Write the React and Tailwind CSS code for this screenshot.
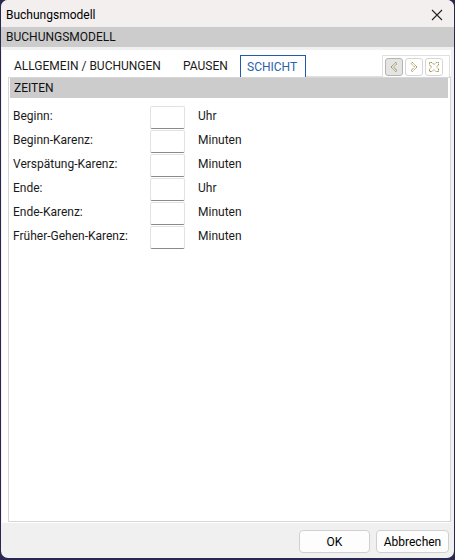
import React from "react";

const rows = [
  ["Beginn:", "Uhr"],
  ["Beginn-Karenz:", "Minuten"],
  ["Verspätung-Karenz:", "Minuten"],
  ["Ende:", "Uhr"],
  ["Ende-Karenz:", "Minuten"],
  ["Früher-Gehen-Karenz:", "Minuten"],
];

function NavBtn({ pressed, children }) {
  return (
    <div
      className={
        "w-[18px] h-[18px] rounded-[3px] border flex items-center justify-center " +
        (pressed ? "bg-[#e4e4e4] border-[#b4b4b4]" : "bg-white border-[#d6d6d6]")
      }
    >
      {children}
    </div>
  );
}

const ic = { fill: "none", stroke: "#8c7a26", strokeWidth: 1, strokeDasharray: "1 0.7" };

export default function App() {
  return (
    <div
      className="w-[455px] h-[560px] bg-[#2a2850] overflow-hidden"
      style={{ fontFamily: 'Roboto, "Liberation Sans", Arial, sans-serif' }}
    >
      <div className="w-[453px] h-[558px] ml-[1px] rounded-[7px] bg-[#f0f0f0] flex flex-col overflow-hidden text-[12px] text-[#1a1a1a]">
        {/* title bar */}
        <div className="h-[27px] bg-[#f3efef] flex items-center justify-between pl-[5px] pr-[10px] pt-[3px] shrink-0">
          <span className="text-[12px] text-black">Buchungsmodell</span>
          <svg width="12" height="12" viewBox="0 0 12 12" className="mr-[1px]">
            <path d="M1 1L11 11M11 1L1 11" stroke="#222" strokeWidth="1.1" />
          </svg>
        </div>
        {/* header */}
        <div className="h-[20px] bg-[#cccccc] flex items-center pl-[5px] shrink-0">
          <span className="text-[12px] text-[#111]">BUCHUNGSMODELL</span>
        </div>
        <div className="h-[3px] shrink-0" />
        {/* white area */}
        <div className="flex-1 ml-[1px] w-[449px] bg-white flex flex-col pl-[6px] min-h-0">
          {/* tabs row */}
          <div className="h-[27px] flex items-end shrink-0 relative">
            <div className="h-[22px] flex items-center pl-[6px] w-[175px] text-[12px] text-[#1a1a1a]">
              ALLGEMEIN / BUCHUNGEN
            </div>
            <div className="h-[22px] flex items-center w-[57px] text-[12px] text-[#1a1a1a]">
              PAUSEN
            </div>
            <div className="h-[22px] w-[66px] border border-b-0 border-[#1d5bb3] flex items-center pl-[6px] text-[12px] text-[#2a5fb0] bg-white">
              SCHICHT
            </div>
            <div className="flex-1 h-[1px] self-end bg-[#e0e0e0]" />
            <div className="absolute right-[1px] top-[5px] h-[22px] w-[68px] border border-b-0 border-[#e0e0e0] flex items-center gap-[2px] pl-[2px] bg-white">
              <NavBtn pressed>
                <svg width="10" height="12" viewBox="0 0 10 12">
                  <path d="M6.5 1.5L2 6L6.5 10.5L8 9.5L4.5 6L8 2.5Z" {...ic} />
                </svg>
              </NavBtn>
              <NavBtn>
                <svg width="10" height="12" viewBox="0 0 10 12">
                  <path d="M3.5 1.5L8 6L3.5 10.5L2 9.5L5.5 6L2 2.5Z" {...ic} />
                </svg>
              </NavBtn>
              <NavBtn>
                <svg width="12" height="12" viewBox="0 0 12 12">
                  <path d="M1.5 1.5L4 1.5L6 3.5L8 1.5L10.5 1.5L10.5 4L8.5 6L10.5 8L10.5 10.5L8 10.5L6 8.5L4 10.5L1.5 10.5L1.5 8L3.5 6L1.5 4Z" {...ic} />
                </svg>
              </NavBtn>
            </div>
          </div>
          {/* panel */}
          <div className="flex-1 border-l border-r border-b border-t border-[#d6d6d6] pl-[1px] pr-[2px] flex flex-col min-h-0">
            <div className="h-[20px] bg-[#cccccc] flex items-center pl-[4px] shrink-0">
              <span className="text-[12px] text-[#111]">ZEITEN</span>
            </div>
            <div className="flex flex-col pt-[8px] pl-[3px] gap-[1px]">
              {rows.map(([label, unit]) => (
                <div key={label} className="flex items-center h-[23px]">
                  <span className="w-[137px] text-[12px] -mt-[3px]">{label}</span>
                  <div className="w-[35px] h-[23px] border border-[#e2e2e2] border-b-[#8a8a8a] rounded-[2px] bg-white" />
                  <span className="ml-[13px] text-[12px] -mt-[3px]">{unit}</span>
                </div>
              ))}
            </div>
          </div>
          <div className="h-[1px] shrink-0" />
        </div>
        {/* footer */}
        <div className="h-[35px] shrink-0 flex items-center justify-end gap-[6px] pr-[5px] pt-[2px]">
          <button className="w-[71px] h-[23px] rounded-[4px] border border-[#d0d0d0] bg-[#fdfdfd] text-[12px] text-black">
            OK
          </button>
          <button className="w-[73px] h-[23px] rounded-[4px] border border-[#d0d0d0] bg-[#fdfdfd] text-[12px] text-black">
            Abbrechen
          </button>
        </div>
      </div>
    </div>
  );
}
